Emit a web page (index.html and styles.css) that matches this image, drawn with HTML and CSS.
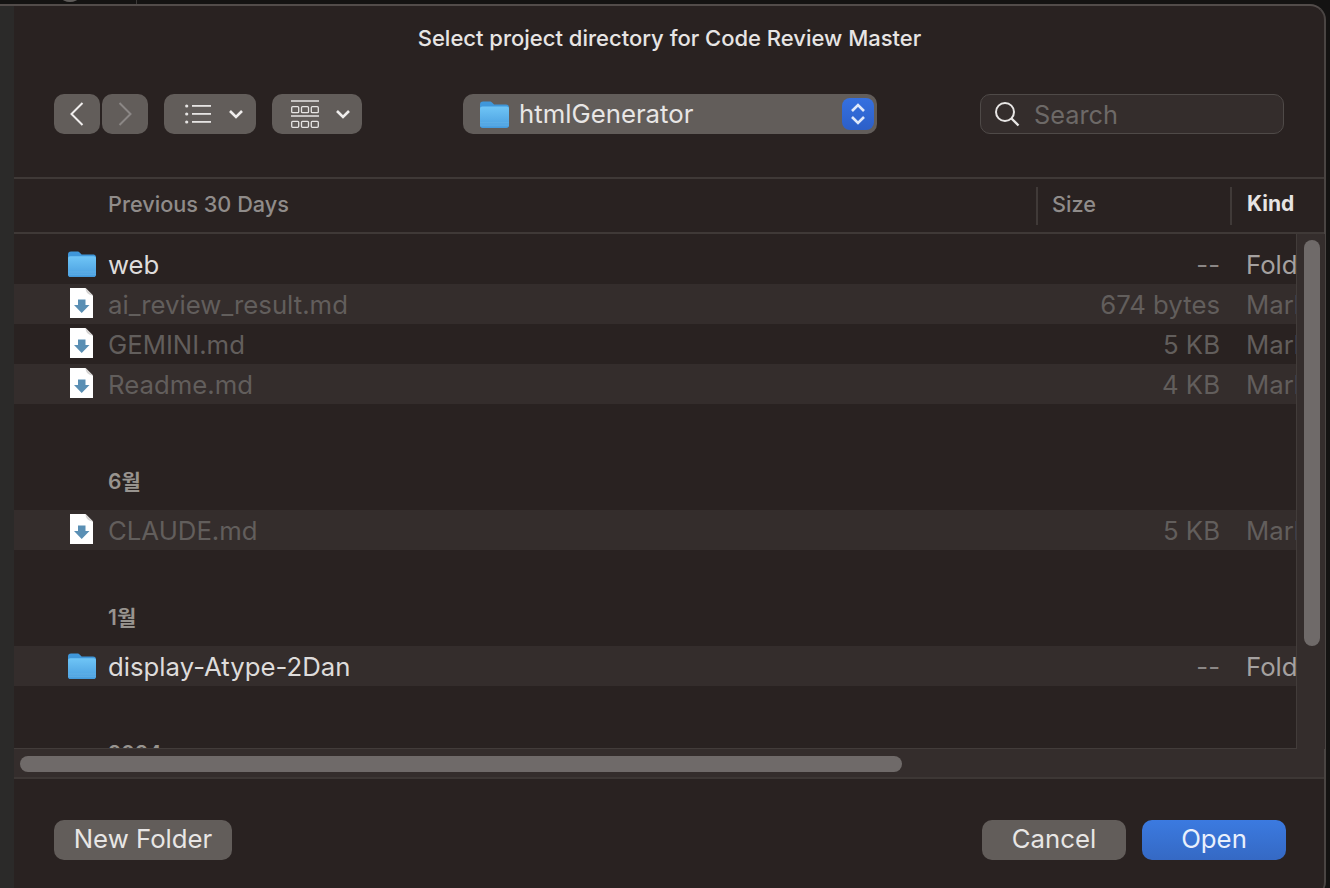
FILE: index.html
```html
<!DOCTYPE html>
<html lang="en">
<head>
<meta charset="utf-8">
<title>Select project directory</title>
<link rel="stylesheet" href="styles.css">
</head>
<body>
<svg class="defs" width="0" height="0" aria-hidden="true">
  <defs>
    <linearGradient id="fg" x1="0" y1="0" x2="0" y2="1">
      <stop offset="0" stop-color="#6fc5f6"/>
      <stop offset="1" stop-color="#4a9fe0"/>
    </linearGradient>
    <symbol id="folder" viewBox="0 0 28 26">
      <path d="M0 3.500C0 1.600 1 .5 3 .5h6.200c1.200 0 1.900.4 2.700 1.200L13.600 3.400H25c2 0 3 1 3 3v17c0 1.700-1 2.600-2.800 2.600H2.800C1 26 0 25.100 0 23.400Z" fill="#3f97da"/>
      <path d="M0 7.500C0 6 .9 5.300 2.400 5.300h23.200C27.100 5.300 28 6 28 7.500v15.700c0 1.500-.9 2.300-2.400 2.300H2.400C.9 25.500 0 24.700 0 23.200Z" fill="url(#fg)"/>
      <path d="M0 21h28M0 23.200h28" stroke="#8fd0f4" stroke-opacity=".35" stroke-width=".7"/>
    </symbol>
    <symbol id="doc" viewBox="0 0 24 30">
      <path d="M0 0h15.500L23 7.500V30H0Z" fill="#fff"/>
      <path d="M15.500 0c.3 4.500 2.500 7 7.500 7.500Z" fill="#d5d3d2"/>
      <path d="M8 11.500h7.500v5.500h4L11.700 25 4 17h4Z" fill="#5a8fb4"/>
    </symbol>
  </defs>
</svg>
<div class="topstrip"><span class="topglyph"></span><span class="toptick"></span></div>
<div class="desk">
  <div class="leftstrip"></div>
  <main class="sheet">
    <h1 class="title">Select project directory for Code Review Master</h1>
    <div class="toolbar">
      <div class="navgroup">
        <button class="tbtn nav"><svg width="16" height="26" viewBox="0 0 16 26"><path d="M13.500 2 2.500 13l11 11" fill="none" stroke="#f0eeed" stroke-width="2"/></svg></button>
        <button class="tbtn nav"><svg width="16" height="26" viewBox="0 0 16 26"><path d="M2.500 2l11 11-11 11" fill="none" stroke="#8b8785" stroke-width="2"/></svg></button>
      </div>
      <button class="tbtn listbtn">
        <svg width="26" height="20" viewBox="0 0 26 20"><g fill="#e6e4e3"><circle cx="1.700" cy="2" r="1.600"/><circle cx="1.700" cy="10" r="1.600"/><circle cx="1.700" cy="18" r="1.600"/><rect x="7" y="1" width="19" height="1.800"/><rect x="7" y="9" width="19" height="1.800"/><rect x="7" y="17" width="19" height="1.800"/></g></svg>
        <svg class="chev" width="16" height="10" viewBox="0 0 16 10"><path d="M2 2l6 6 6-6" fill="none" stroke="#efedec" stroke-width="2.600"/></svg>
      </button>
      <button class="tbtn gridbtn">
        <svg width="28" height="28" viewBox="0 0 28 28"><g fill="none" stroke="#e6e4e3" stroke-width="1.300"><path d="M0 1h28M0 16h28" stroke-width="1.600"/><rect x=".7" y="6.700" width="7" height="6" rx="1"/><rect x="10.500" y="6.700" width="7" height="6" rx="1"/><rect x="20.300" y="6.700" width="7" height="6" rx="1"/><rect x=".7" y="21.300" width="7" height="6" rx="1"/><rect x="10.500" y="21.300" width="7" height="6" rx="1"/><rect x="20.300" y="21.300" width="7" height="6" rx="1"/></g></svg>
        <svg class="chev" width="16" height="10" viewBox="0 0 16 10"><path d="M2 2l6 6 6-6" fill="none" stroke="#efedec" stroke-width="2.600"/></svg>
      </button>
      <div class="pathpop">
        <svg class="pathicon" width="29" height="27"><use href="#folder"/></svg>
        <span class="pathname">htmlGenerator</span>
        <span class="stepper"><svg width="16" height="26" viewBox="0 0 16 26"><path d="M2 10l6-6 6 6M2 16l6 6 6-6" fill="none" stroke="#dfe8fa" stroke-width="2.600"/></svg></span>
      </div>
      <div class="search">
        <svg width="26" height="26" viewBox="0 0 26 26"><circle cx="11" cy="11" r="9" fill="none" stroke="#e8e6e5" stroke-width="2"/><path d="M17.500 17.500l7 7" stroke="#e8e6e5" stroke-width="2.400"/></svg>
        <span class="placeholder">Search</span>
      </div>
    </div>
    <div class="colhead">
      <div class="hname">Previous 30 Days</div>
      <div class="hsize">Size</div>
      <div class="hkind">Kind</div>
    </div>
    <div class="browser">
      <div class="listwrap">
        <div class="list">
          <div class="row"><svg class="ficon" width="28" height="26"><use href="#folder"/></svg><span class="name">web</span><span class="size">--</span><span class="kind">Folder</span></div>
          <div class="row alt off"><svg class="dicon" width="24" height="30"><use href="#doc"/></svg><span class="name">ai_review_result.md</span><span class="size">674 bytes</span><span class="kind">Markdown</span></div>
          <div class="row off"><svg class="dicon" width="24" height="30"><use href="#doc"/></svg><span class="name">GEMINI.md</span><span class="size">5 KB</span><span class="kind">Markdown</span></div>
          <div class="row alt off"><svg class="dicon" width="24" height="30"><use href="#doc"/></svg><span class="name">Readme.md</span><span class="size">4 KB</span><span class="kind">Markdown</span></div>
          <div class="group first">6월</div>
          <div class="row alt off"><svg class="dicon" width="24" height="30"><use href="#doc"/></svg><span class="name">CLAUDE.md</span><span class="size">5 KB</span><span class="kind">Markdown</span></div>
          <div class="group">1월</div>
          <div class="row alt"><svg class="ficon" width="28" height="26"><use href="#folder"/></svg><span class="name">display-Atype-2Dan</span><span class="size">--</span><span class="kind">Folder</span></div>
          <div class="group">2024</div>
        </div>
        <div class="vtrack"><div class="vthumb"></div></div>
      </div>
      <div class="htrack"><div class="hthumb"></div></div>
    </div>
    <div class="footer">
      <button class="btn newfolder">New Folder</button>
      <div class="actions">
        <button class="btn cancel">Cancel</button>
        <button class="btn open">Open</button>
      </div>
    </div>
  </main>
  <div class="rightstrip"></div>
</div>
</body>
</html>
```
FILE: styles.css
```css
* { box-sizing: border-box; }
html, body { margin: 0; height: 100%; overflow: hidden; }
body {
  width: 1330px;
  height: 888px;
  background: #141312;
  font-family: Inter, "Noto Sans CJK KR", sans-serif;
  display: flex;
  flex-direction: column;
}
.defs { position: absolute; }
.topstrip { height: 4px; background: #141312; flex: none; position: relative; overflow: hidden; }
.topglyph { position: absolute; left: 62px; top: -6px; width: 16px; height: 8px; border: 2px solid #5e5b59; border-radius: 50%; }
.toptick { position: absolute; left: 136px; top: 0; width: 1px; height: 4px; background: #3a3837; }
.desk { flex: 1; display: flex; min-height: 0; }
.leftstrip { width: 14px; background: #2b2a29; border-top: 2px solid #524c4a; flex: none; }
.rightstrip { flex: 1; background: #141312; }
.sheet {
  width: 1312px;
  flex: none;
  margin-bottom: -8px;
  background: #292221;
  border-top: 2px solid #524c4a;
  border-right: 2px solid #4a4543;
  border-top-right-radius: 16px;
  border-bottom-right-radius: 14px;
  display: flex;
  flex-direction: column;
  min-height: 0;
}
.title {
  margin: 0;
  height: 64px;
  padding-top: 19px;
  padding-left: 1px;
  text-align: center;
  font-size: 22px;
  line-height: 26px;
  font-weight: 500;
  color: #e7e5e4;
}
.toolbar {
  height: 40px;
  margin-top: 24px;
  padding-left: 40px;
  display: flex;
  align-items: stretch;
}
button { font-family: inherit; border: 0; padding: 0; margin: 0; }
.tbtn {
  height: 40px;
  background: #625d5a;
  border-radius: 10px;
  display: flex;
  align-items: center;
  justify-content: center;
}
.navgroup { display: flex; gap: 2px; margin-right: 16px; }
.nav { width: 46px; }
.listbtn { width: 92px; gap: 17px; margin-right: 16px; padding-left: 8px; }
.gridbtn { width: 90px; gap: 16px; padding-left: 7px; }
.chev { flex: none; }
.pathpop {
  width: 414px;
  margin-left: 101px;
  background: #625d5a;
  border-radius: 10px;
  display: flex;
  align-items: center;
  padding-left: 17px;
  padding-right: 3px;
}
.pathname { font-size: 25.75px; color: #e8e6e5; margin-left: 10px; flex: 1; padding-bottom: 2px; }
.stepper {
  width: 32px;
  height: 32px;
  background: linear-gradient(#3570e0, #2c5fc8);
  border-radius: 8px;
  display: flex;
  align-items: center;
  justify-content: center;
}
.search {
  width: 304px;
  margin-left: 103px;
  background: #342d2c;
  border: 1px solid #4f4a48;
  border-radius: 10px;
  display: flex;
  align-items: center;
  padding-left: 13px;
  gap: 14px;
}
.placeholder { font-size: 25.3px; color: #6d6967; padding-top: 1px; }
.colhead {
  margin-top: 43px;
  height: 57px;
  border-top: 2px solid #3f3937;
  border-bottom: 2px solid #3f3937;
  display: flex;
  align-items: center;
  font-size: 21.7px;
  color: #908c8a;
  font-weight: 500;
}
.hname { width: 1022px; padding-left: 94px; padding-bottom: 4px; }
.hsize { width: 194px; padding-left: 14px; height: 38px; line-height: 34px; border-left: 2px solid #403a38; }
.hkind { padding-left: 15px; height: 38px; line-height: 34px; border-left: 2px solid #403a38; font-weight: 700; color: #e6e4e3; font-size: 21px; }
.browser { flex: none; }
.listwrap { height: 515px; display: flex; }
.list {
  width: 1283px;
  flex: none;
  padding-top: 10px;
  overflow: hidden;
  border-right: 1px solid #423c3a;
  border-bottom: 1px solid #423c3a;
}
.row {
  height: 40px;
  display: flex;
  align-items: center;
  font-size: 25.75px;
  color: #dedcdb;
  white-space: nowrap;
  overflow: hidden;
}
.alt { background: #342d2c; }
.off { color: #625e5c; }
.ficon { margin-left: 54px; margin-right: 12px; flex: none; }
.dicon { margin-left: 56px; margin-right: 14px; margin-bottom: 2px; flex: none; }
.name { flex: none; width: 929px; }
.size { flex: none; width: 183px; text-align: right; color: #8b8786; margin-right: 26px; }
.off .size { color: #625e5c; }
.kind { flex: none; color: #a5a1a0; }
.off .kind { color: #625e5c; }
.group {
  padding-left: 94px;
  font-size: 21px;
  line-height: 26px;
  font-weight: 600;
  color: #98948f;
}
.group.first { height: 106px; padding-top: 65px; }
.group:not(.first) { height: 96px; padding-top: 55px; }
.vtrack { flex: 1; background: #342d2c; padding: 6px 5px 0 7px; }
.vthumb { height: 406px; width: 16px; border-radius: 8px; background: #6f6a69; }
.htrack {
  height: 30px;
  background: #342d2c;
  border-bottom: 2px solid #3d3735;
  padding: 7px 0 0 6px;
}
.hthumb { width: 882px; height: 16px; border-radius: 8px; background: #6f6a69; }
.footer {
  flex: 1;
  display: flex;
  justify-content: space-between;
  padding: 41px 38px 0 40px;
}
.btn {
  height: 40px;
  border-radius: 10px;
  font-size: 25.75px;
  color: #e8e6e5;
  background: #625d5a;
  padding-bottom: 3px;
}
.newfolder { width: 178px; }
.actions { display: flex; gap: 16px; }
.cancel { width: 144px; }
.open { width: 144px; background: linear-gradient(#3b7ae0, #3569c4); color: #e9f0fc; }
```
